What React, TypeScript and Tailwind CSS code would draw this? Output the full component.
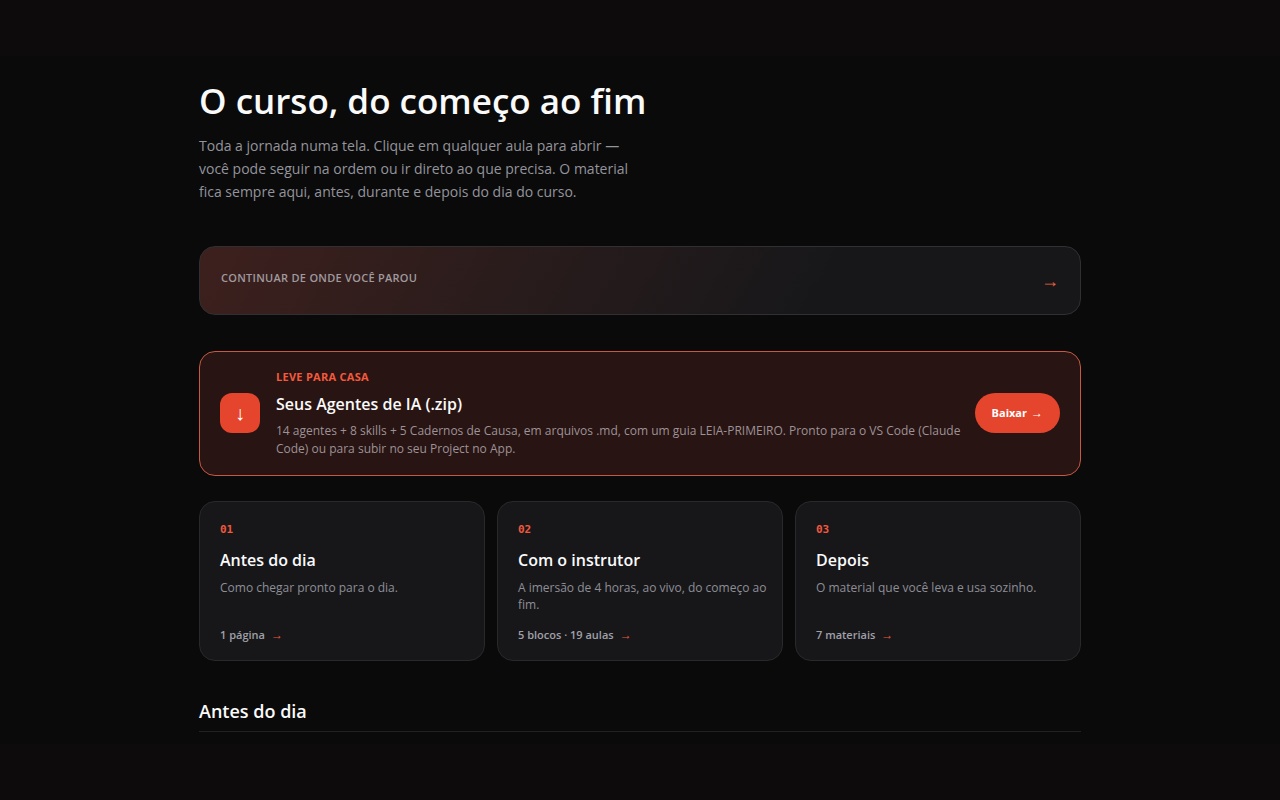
import React from 'react'

interface Stage {
  number: string
  title: string
  description: string
  meta: string
  href: string
}

const stages: Stage[] = [
  {
    number: '01',
    title: 'Antes do dia',
    description: 'Como chegar pronto para o dia.',
    meta: '1 página',
    href: '#antes',
  },
  {
    number: '02',
    title: 'Com o instrutor',
    description: 'A imersão de 4 horas, ao vivo, do começo ao fim.',
    meta: '5 blocos · 19 aulas',
    href: '#instrutor',
  },
  {
    number: '03',
    title: 'Depois',
    description: 'O material que você leva e usa sozinho.',
    meta: '7 materiais',
    href: '#depois',
  },
]

const ResumeCard: React.FC = () => (
  <a
    href="#continuar"
    className="mt-[43px] flex h-[69px] items-center justify-between rounded-2xl border border-[#303032] bg-linear-120 from-[#3d201d] to-[#17171a] to-70% px-[21px]"
  >
    <span className="pb-1 text-[11px] font-semibold tracking-wide text-[#a09a9f]">CONTINUAR DE ONDE VOCÊ PAROU</span>
    <span className="font-['Liberation_Sans',sans-serif] text-lg text-[#f0603f]">→</span>
  </a>
)

const DownloadCard: React.FC = () => (
  <section className="mt-9 flex items-center gap-3 rounded-2xl border border-[#c95840] bg-[#281412] px-5 pt-4 pb-[17px]">
    <div className="mr-1 flex size-10 shrink-0 items-center justify-center rounded-xl bg-[#e5452d] font-['Liberation_Sans',sans-serif] text-xl text-white">
      ↓
    </div>
    <div className="min-w-0 flex-1">
      <p className="text-[11px] leading-[18px] font-bold tracking-wide text-[#f4593d]">LEVE PARA CASA</p>
      <h2 className="mt-1 text-base leading-7 font-semibold text-[#fafafa]">Seus Agentes de IA (.zip)</h2>
      <p className="mt-1 text-xs leading-[18px] text-[#9d9297]">
        14 agentes + 8 skills + 5 Cadernos de Causa, em arquivos .md, com um guia LEIA-PRIMEIRO. Pronto para o
        VS Code (Claude Code) ou para subir no seu Project no App.
      </p>
    </div>
    <button
      type="button"
      className="flex h-10 shrink-0 cursor-pointer items-center gap-1 rounded-full bg-[#e5452d] px-[17px] text-[11px] font-bold text-white"
    >
      Baixar <span className="font-['Liberation_Sans',sans-serif] text-xs">→</span>
    </button>
  </section>
)

const StageCard: React.FC<{ stage: Stage }> = ({ stage }) => (
  <a
    href={stage.href}
    className="flex h-40 flex-col rounded-2xl border border-[#29292b] bg-[#17171a] pt-[19px] pr-3 pb-4 pl-5"
  >
    <span className="font-['DejaVu_Sans_Mono',monospace] text-[11px] leading-[18px] font-bold text-[#f0583d]">
      {stage.number}
    </span>
    <h3 className="mt-[7px] text-base leading-7 font-semibold text-[#fafafa]">{stage.title}</h3>
    <p className="mt-[5px] text-xs leading-[17px] text-[#8e8e96]">{stage.description}</p>
    <span className="mt-auto flex items-center gap-1.5 text-[11px] leading-[18px] font-semibold text-[#a0a0a8]">
      {stage.meta}
      <span className="font-['Liberation_Sans',sans-serif] text-xs font-bold text-[#f0583d]">→</span>
    </span>
  </a>
)

export default function App() {
  return (
    <div className="min-h-screen bg-[#0d0b0b] py-14 font-['Open_Sans','Noto_Sans',sans-serif]">
      <main className="bg-[#0a0a0a] px-6 pt-5 pb-3">
        <div className="mx-auto max-w-[882px]">
          <header>
            <h1 className="text-[35px] leading-[50px] font-semibold text-[#fafafa]">O curso, do começo ao fim</h1>
            <p className="mt-2 max-w-[448px] text-sm leading-[23px] text-[#94949c]">
              Toda a jornada numa tela. Clique em qualquer aula para abrir — você pode seguir na ordem ou ir
              direto ao que precisa. O material fica sempre aqui, antes, durante e depois do dia do curso.
            </p>
          </header>

          <ResumeCard />
          <DownloadCard />

          <nav className="mt-[25px] grid grid-cols-1 gap-3 md:grid-cols-3">
            {stages.map((stage) => (
              <StageCard key={stage.number} stage={stage} />
            ))}
          </nav>

          <h2
            id="antes"
            className="mt-9 border-b border-[#222224] pb-1.5 text-lg leading-7 font-semibold text-[#fafafa]"
          >
            Antes do dia
          </h2>
        </div>
      </main>
    </div>
  )
}
